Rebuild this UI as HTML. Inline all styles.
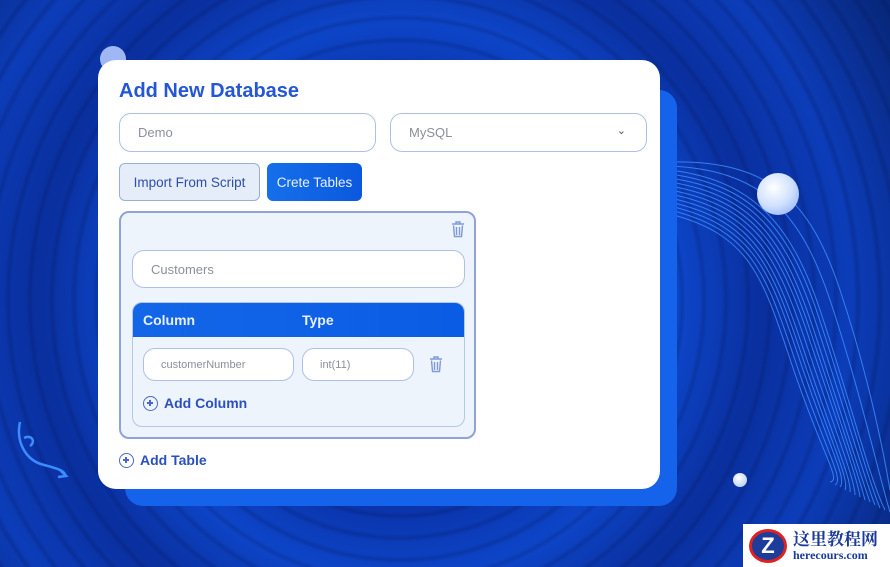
<!DOCTYPE html>
<html><head><meta charset="utf-8"><style>
*{box-sizing:border-box;margin:0;padding:0}
body{width:890px;height:567px;overflow:hidden;position:relative;font-family:"Liberation Sans",sans-serif;
background:radial-gradient(circle at 400px 300px,#0a2a8a 0,#0d3fc0 120px,#0a32a8 200px,#0d45c8 280px,#0a2f9e 360px,#0c3cb8 450px,#08287e 560px,#071c5a 700px);}
.rings{position:absolute;inset:0;background:repeating-radial-gradient(circle at 400px 300px,rgba(255,255,255,0) 0,rgba(255,255,255,0) 14px,rgba(0,10,60,.18) 18px,rgba(255,255,255,0) 22px)}
.shadow{position:absolute;left:125px;top:90px;width:552px;height:416px;background:#1463ea;border-radius:18px}
.card{position:absolute;left:98px;top:60px;width:562px;height:429px;background:#fff;border-radius:18px}
.abs{position:absolute}
h1{position:absolute;left:21px;top:20px;font-size:20px;color:#2456d6;font-weight:bold}
.inp{position:absolute;border:1.5px solid #aec0e8;border-radius:12px;background:#fff;color:#8a8f9c;font-size:13px;display:flex;align-items:center}
.btn{position:absolute;border-radius:6px;font-size:13.5px;display:flex;align-items:center;justify-content:center}
.tb{position:absolute;left:21px;top:151px;width:357px;height:228px;border:2px solid #8fa3d6;border-radius:10px;background:#eef4fc}
.inner{position:absolute;left:11px;top:89px;width:333px;height:125px;border:1.5px solid #b5c6e6;border-radius:10px;background:#eef4fc;overflow:hidden}
.hdr{height:34px;background:linear-gradient(90deg,#1466e8,#0a5ce4);color:#e8f0ff;font-weight:bold;font-size:14px;position:relative}
.link{position:absolute;color:#2a50c0;font-weight:bold;font-size:14px;display:flex;align-items:center;gap:6px}
.circ{width:15px;height:15px;border:1.5px solid #4a68c8;border-radius:50%;position:relative}
.circ:before{content:"";position:absolute;left:3px;top:5.5px;width:6px;height:1.5px;background:#4a68c8}
.circ:after{content:"";position:absolute;left:5.3px;top:3px;width:1.5px;height:6px;background:#4a68c8}
</style></head><body>
<div class="rings"></div>
<svg class="abs" style="left:670px;top:160px" width="220" height="360">
<g fill="none" stroke="#3d8cff" stroke-width="1" opacity=".85">
<path d="M0 2 C100 0 140 40 170 130 S215 300 220 330"/>
<path d="M0 6 C90 10 130 50 160 140 S210 320 220 352"/>
<path d="M0 10 C80 20 120 60 150 150 S200 320 215 350"/>
<path d="M0 14 C80 25 118 65 148 155 S198 320 210 348"/>
<path d="M0 18 C80 30 115 70 145 160 S195 320 205 345"/>
<path d="M0 22 C80 35 112 75 142 165 S192 320 200 342"/>
<path d="M0 26 C80 40 110 80 140 170 S190 320 195 340"/>
<path d="M0 30 C80 45 108 85 138 175 S188 320 190 337"/>
<path d="M0 34 C80 50 105 90 135 180 S185 320 185 335"/>
<path d="M0 38 C80 55 102 95 132 185 S182 320 180 332"/>
<path d="M0 42 C80 60 100 100 130 190 S180 320 175 330"/>
<path d="M0 46 C80 65 98 105 128 195 S178 320 170 327"/>
<path d="M0 50 C80 70 95 110 125 200 S175 320 165 325"/>
<path d="M0 54 C80 75 92 115 122 205 S172 320 160 322"/>
</g></svg>
<div class="abs" style="left:757px;top:173px;width:42px;height:42px;border-radius:50%;background:radial-gradient(circle at 40% 35%,#fff,#cfe0ff 50%,#7fa6f0)"></div>
<div class="abs" style="left:733px;top:473px;width:14px;height:14px;border-radius:50%;background:radial-gradient(circle at 40% 35%,#fff,#aac4f5)"></div>
<div class="abs" style="left:100px;top:46px;width:26px;height:26px;border-radius:50%;background:#9fb8f5"></div>
<svg class="abs" style="left:14px;top:420px" width="60" height="60"><path d="M6 2 C2 20 10 40 30 45 S50 52 52 56 M46 50 L52 56 L44 57 M10 18 C18 14 22 22 16 26" fill="none" stroke="#3a8cff" stroke-width="2.5"/></svg>
<div class="shadow"></div>
<div class="card">
<h1>Add New Database</h1>
<div class="inp" style="left:21px;top:53px;width:257px;height:39px;padding-left:18px">Demo</div>
<div class="inp" style="left:292px;top:53px;width:257px;height:39px;padding-left:18px">MySQL<span style="position:absolute;right:20px;top:10px;font-size:11px;color:#555">&#8964;</span></div>
<div class="btn" style="left:21px;top:103px;width:141px;height:38px;background:#e5edf9;border:1.5px solid #9aaedb;color:#2f4fa8">Import From Script</div>
<div class="btn" style="left:169px;top:103px;width:95px;height:38px;background:linear-gradient(90deg,#1670ea,#0a58de);color:#e8f0ff">Crete Tables</div>
<div class="tb">
<svg class="abs" style="left:330px;top:8px" width="14" height="17" viewBox="0 0 14 17"><path d="M1 3h12M5 3V1h4v2M2.5 4.5l1 11h7l1-11M5.5 6v8M8.5 6v8" fill="none" stroke="#7f9ad8" stroke-width="1.4"/></svg>
<div class="inp" style="left:11px;top:37px;width:333px;height:38px;padding-left:18px">Customers</div>
<div class="inner">
<div class="hdr"><span class="abs" style="left:10px;top:9px">Column</span><span class="abs" style="left:169px;top:9px">Type</span></div>
<div class="inp" style="left:10px;top:45px;width:151px;height:33px;padding-left:17px;font-size:11px">customerNumber</div>
<div class="inp" style="left:169px;top:45px;width:112px;height:33px;padding-left:17px;font-size:11px">int(11)</div>
<svg class="abs" style="left:296px;top:53px" width="14" height="17" viewBox="0 0 14 17"><path d="M1 3h12M5 3V1h4v2M2.5 4.5l1 11h7l1-11M5.5 6v8M8.5 6v8" fill="none" stroke="#7f9ad8" stroke-width="1.4"/></svg>
<div class="link" style="left:10px;top:92px"><div class="circ"></div>Add Column</div>
</div>
</div>
<div class="link" style="left:21px;top:392px"><div class="circ"></div>Add Table</div>
</div>
<div class="abs" style="left:743px;top:524px;width:147px;height:43px;background:#fff;display:flex;align-items:center">
<div style="width:38px;height:34px;margin-left:6px;border-radius:50%;background:#1e3c9a;border:3px solid #d22;color:#fff;font-weight:bold;font-size:22px;display:flex;align-items:center;justify-content:center">Z</div>
<div style="margin-left:6px"><div style="font-family:'Noto Serif CJK SC',serif;color:#1b3a9a;font-weight:bold;font-size:17px;line-height:20px">这里教程网</div><div style="font-family:'Liberation Serif',serif;color:#1b3a9a;font-weight:bold;font-size:12px">herecours.com</div></div>
</div>
</body></html>
